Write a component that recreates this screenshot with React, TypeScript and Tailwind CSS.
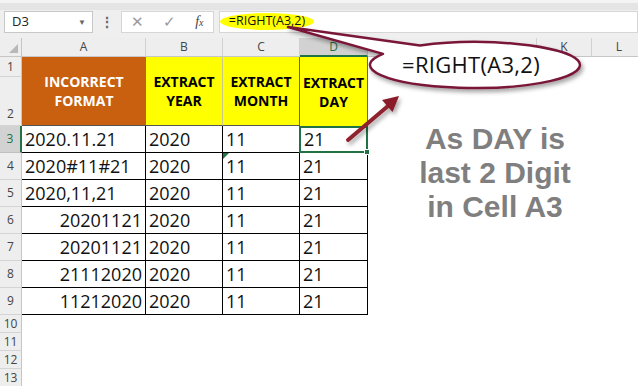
import React from "react";

const font = { fontFamily: '"Open Sans", "Noto Sans", sans-serif' };

const rows = [
  { n: 4, a: "2020#11#21", right: false },
  { n: 5, a: "2020,11,21", right: false },
  { n: 6, a: "20201121", right: true },
  { n: 7, a: "20201121", right: true },
  { n: 8, a: "21112020", right: true },
  { n: 9, a: "11212020", right: true },
];

function RowHead({ n, active }: { n: number | string; active?: boolean }) {
  return (
    <div
      className={`flex items-center justify-center text-[12px] border-b border-r ${
        active
          ? "bg-[#d2d2d2] text-[#217346] border-b-[#c0c0c0] border-r-2 border-r-[#217346]"
          : "bg-[#eeeeee] text-[#444] border-b-[#d4d4d4] border-r-[#c6c6c6]"
      }`}
    >
      {n}
    </div>
  );
}

function ColHead({ l, active }: { l: string; active?: boolean }) {
  return (
    <div
      className={`flex items-center justify-center text-[12px] border-r ${
        active
          ? "bg-[#d2d2d2] text-[#217346] border-r-[#c0c0c0] border-b-2 border-b-[#217346]"
          : "bg-[#eeeeee] text-[#444] border-r-[#d0d0d0] border-b border-b-[#c6c6c6]"
      }`}
    >
      {l}
    </div>
  );
}

function Cell({ children, right, extra = "" }: { children?: React.ReactNode; right?: boolean; extra?: string }) {
  return (
    <div
      className={`flex items-center text-[18px] leading-[27px] text-[#111] border-r border-b border-black ${
        right ? "justify-end pr-[3px]" : "pl-[3px]"
      } ${extra}`}
    >
      {children}
    </div>
  );
}

export default function App() {
  return (
    <div className="relative w-[638px] h-[386px] overflow-hidden bg-white" style={font}>
      {/* ribbon edge + formula bar */}
      <div className="h-[38px] bg-[#efefef]">
        <div className="h-[10px] bg-[#e4e4e4] border-t-[3px] border-t-[#f4f4f4]" />
        <div className="flex items-center h-[23px] text-[13px] text-[#222]">
          <div className="ml-[4px] w-[89px] h-[22px] bg-white border border-[#c8c8c8] flex items-center justify-between pl-[7px] pr-[6px]">
            <span>D3</span>
            <span className="text-[8px] text-[#666]">▼</span>
          </div>
          <div className="w-[28px] flex justify-center text-[#666] text-[14px] font-bold">⋮</div>
          <div className="w-[93px] h-[22px] bg-white border border-[#d6d6d6] flex items-center justify-around text-[#9a9a9a]">
            <span className="text-[15px]">✕</span>
            <span className="text-[15px]">✓</span>
            <span className="italic text-[#444] text-[14px]" style={{ fontFamily: '"Liberation Serif", serif' }}>
              f<span className="text-[10px]">x</span>
            </span>
          </div>
          <div className="ml-[5px] flex-1 h-[22px] bg-white border border-[#d6d6d6] flex items-center">
            <span className="bg-[#ffff00] rounded-[50%] h-[17px] w-[94px] flex items-center justify-center text-[12.5px] text-[#111]">
              =RIGHT(A3,2)
            </span>
          </div>
        </div>
      </div>

      {/* sheet */}
      <div className="grid grid-cols-[22px_124px_77px_77px_68px_169px_55px_55px] grid-rows-[19px_20px_49px_repeat(7,27px)_repeat(4,18px)]">
        <div className="relative bg-[#eeeeee] border-r border-b border-[#c6c6c6]">
          <div className="absolute right-[3px] bottom-[3px] w-0 h-0 border-l-[9px] border-l-transparent border-b-[9px] border-b-[#b8b8b8]" />
        </div>
        <ColHead l="A" />
        <ColHead l="B" />
        <ColHead l="C" />
        <ColHead l="D" active />
        <ColHead l="" />
        <ColHead l="K" />
        <ColHead l="L" />

        <RowHead n={1} />
        <div className="row-span-2 bg-[#c8600f] text-white font-bold text-[14px] leading-[19px] flex items-center justify-center text-center border-b border-[#555]">
          INCORRECT
          <br />
          FORMAT
        </div>
        <div className="row-span-2 bg-[#ffff00] text-black font-bold text-[14px] leading-[19px] flex items-center justify-center text-center border-r border-[#c9c98a] border-b border-b-[#555]">
          EXTRACT
          <br />
          YEAR
        </div>
        <div className="row-span-2 bg-[#ffff00] text-black font-bold text-[14px] leading-[19px] flex items-center justify-center text-center border-r border-[#5e6e2a] border-b border-b-[#555]">
          EXTRACT
          <br />
          MONTH
        </div>
        <div className="row-span-2 bg-[#ffff00] text-black font-bold text-[14px] leading-[19px] flex items-center justify-center text-center border-r border-[#5e6e2a]">
          EXTRACT
          <br />
          DAY
        </div>
        <div className="row-span-2" />
        <div className="row-span-2" />
        <div className="row-span-2" />
        <div className="flex items-end justify-center pb-[2px] text-[12px] text-[#444] bg-[#eeeeee] border-r border-b border-r-[#c6c6c6] border-b-[#d4d4d4]">2</div>

        {/* row 3 */}
        <RowHead n={3} active />
        <Cell>2020.11.21</Cell>
        <Cell>2020</Cell>
        <Cell>11</Cell>
        <div className="relative flex items-center pl-[3px] text-[18px] leading-[27px] text-[#111] border-2 border-[#217346] -ml-px">
          21
          <div className="absolute -right-[4px] -bottom-[4px] w-[6px] h-[6px] bg-[#217346] border border-white" />
        </div>
        <div />
        <div />
        <div />

        {rows.map((r) => (
          <React.Fragment key={r.n}>
            <RowHead n={r.n} />
            <Cell right={r.right}>{r.a}</Cell>
            <Cell>2020</Cell>
            <Cell extra="relative">
              {r.n === 4 && (
                <div className="absolute left-0 top-0 w-0 h-0 border-t-[6px] border-t-[#217346] border-r-[6px] border-r-transparent" />
              )}
              11
            </Cell>
            <Cell>21</Cell>
            <div />
            <div />
            <div />
          </React.Fragment>
        ))}

        {[10, 11, 12, 13].map((n) => (
          <React.Fragment key={n}>
            <div className="flex items-center justify-center text-[12px] text-[#444] bg-[#eeeeee] border-r border-b border-r-[#c6c6c6] border-b-[#d4d4d4]">
              {n}
            </div>
            <div className="col-span-7" />
          </React.Fragment>
        ))}
      </div>

      {/* callout + arrow */}
      <svg className="absolute left-0 top-0 pointer-events-none" width="638" height="386">
        <defs>
          <filter id="sh" x="-20%" y="-20%" width="140%" height="160%">
            <feDropShadow dx="2" dy="3" stdDeviation="2" floodColor="#000" floodOpacity="0.35" />
          </filter>
          <linearGradient id="ar" x1="0" y1="0" x2="1" y2="1">
            <stop offset="0" stopColor="#b0343f" />
            <stop offset="1" stopColor="#6e0f1c" />
          </linearGradient>
        </defs>
        <path
          d="M 420 45.4 A 105 23 0 1 1 383 53.9 L 288 27 Z"
          fill="#ffffff"
          stroke="#7a1838"
          strokeWidth="2.5"
          strokeLinejoin="round"
          filter="url(#sh)"
        />
        <g filter="url(#sh)">
          <line x1="348" y1="140" x2="388" y2="106" stroke="url(#ar)" strokeWidth="4" strokeLinecap="round" />
          <polygon points="399,96 392.5,112 382,100" fill="#8a1a2a" />
        </g>
      </svg>

      <div className="absolute left-[402px] top-[53px] text-[22px] leading-[22px] tracking-[0.3px] text-[#111]">=RIGHT(A3,2)</div>

      <div
        className="absolute left-[410px] top-[122px] w-[170px] text-center text-[30px] leading-[34px] font-bold text-[#7f7f7f]"
        style={{ fontFamily: '"Liberation Sans", Arial, sans-serif' }}
      >
        As DAY is
        <br />
        last 2 Digit
        <br />
        in Cell A3
      </div>
    </div>
  );
}
